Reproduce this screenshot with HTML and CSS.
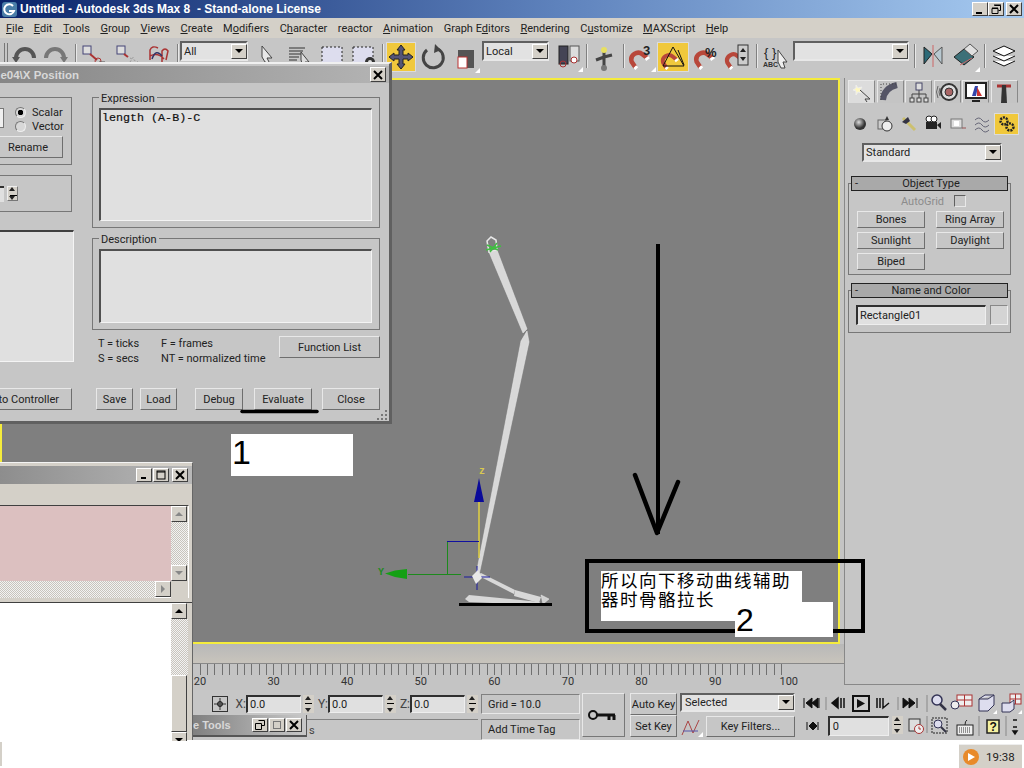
FILE: index.html
```html
<!DOCTYPE html>
<html lang="en">
<head>
<meta charset="utf-8">
<title>Untitled - Autodesk 3ds Max 8 - Stand-alone License</title>
<link rel="stylesheet" href="styles.css">
</head>
<body>
<svg class="defs" width="0" height="0">
  <symbol id="magnet" viewBox="0 0 24 24">
    <path d="M8 21 L4 15 A7.500 7.500 0 0 1 16 7 L21 11" fill="none" stroke="#b8473a" stroke-width="5"/>
    <path d="M7 23 L10 20 M19 13 L23 10" stroke="#fff" stroke-width="3"/>
  </symbol>
  <symbol id="mini" viewBox="0 0 6 6"><path d="M0 6H6V0Z" fill="#fff"/></symbol>
</svg>

<div class="app">
  <div class="titlebar">
    <svg class="app-icon" width="17" height="17"><rect x="1" y="1" width="15" height="15" rx="3" fill="#4a7ea8"/><path d="M12 5 A5 5 0 1 0 13 10 H8" fill="none" stroke="#fff" stroke-width="2"/></svg>
    <span class="title-text">Untitled - Autodesk 3ds Max 8&nbsp; - Stand-alone License</span>
    <div class="win-btns">
      <span class="wbtn"><svg width="14" height="12"><path d="M3 10H9" stroke="#000" stroke-width="2"/></svg></span>
      <span class="wbtn"><svg width="14" height="12"><path d="M5.500 2.500H11.500V7.500H9.500M3 5.500H9V10.500H3Z" fill="none" stroke="#000"/><path d="M5 2H12M3 5H9" stroke="#000" stroke-width="1"/></svg></span>
      <span class="wbtn wbtn-close"><svg width="14" height="12"><path d="M3 2L11 10M11 2L3 10" stroke="#000" stroke-width="2"/></svg></span>
    </div>
  </div>

  <nav class="menubar">
    <span><u>F</u>ile</span><span><u>E</u>dit</span><span><u>T</u>ools</span><span><u>G</u>roup</span><span><u>V</u>iews</span><span><u>C</u>reate</span><span>M<u>o</u>difiers</span><span>C<u>h</u>aracter</span><span>reactor</span><span><u>A</u>nimation</span><span>Graph E<u>d</u>itors</span><span><u>R</u>endering</span><span>C<u>u</u>stomize</span><span><u>M</u>AXScript</span><span><u>H</u>elp</span>
  </nav>

  <div class="toolbar">
    <span class="grip"></span>
    <svg class="cell c30"><path d="M6 16A9 9 0 0 1 24 16" fill="none" stroke="#555" stroke-width="4"/><path d="M2 15L10 15L6 21Z" fill="#555"/></svg>
    <svg class="cell c30"><path d="M6 16A9 9 0 0 1 24 16" fill="none" stroke="#777" stroke-width="4"/><path d="M20 15L28 15L24 21Z" fill="#777"/></svg>
    <span class="sep ml5"></span>
    <svg class="cell c33"><rect x="6" y="4" width="8" height="8" fill="#ddd" stroke="#447"/><path d="M13 12L20 18" stroke="#a33" stroke-width="2"/><circle cx="21" cy="19" r="3" fill="none" stroke="#a33"/><path d="M22 20H28" stroke="#555"/></svg>
    <svg class="cell c34"><rect x="7" y="4" width="8" height="8" fill="#ddd" stroke="#447"/><path d="M14 12L18 15" stroke="#a33" stroke-width="2"/><path d="M20 16L28 20M20 20L24 14" stroke="#999" stroke-dasharray="2 2"/></svg>
    <svg class="cell c28"><path d="M6 18V8Q8 3 14 6M18 20V9Q21 5 24 9L22 18M6 14Q14 10 20 17" fill="none" stroke="#a33" stroke-width="1.500"/><path d="M8 17Q12 6 18 14" fill="none" stroke="#336" stroke-width="1.500"/></svg>
    <span class="sep ml5"></span>
    <div class="combo combo-all ml1"><span class="combo-val">All</span><span class="combo-arrow"></span></div>
    <svg class="cell c32 ml3"><path d="M11 4L21 16L16 16L19 22L14 20L11 15Z" fill="#e8e8e8" stroke="#444"/></svg>
    <svg class="cell c32"><path d="M6 6H22M6 9H20M6 12H18M6 15H16M6 18H14M6 21H14" stroke="#333"/><path d="M18 10L26 20H22L24 25H20L18 18Z" fill="#ddd" stroke="#444"/></svg>
    <svg class="cell c32"><rect x="7" y="5" width="20" height="17" fill="#dde" stroke="#222" stroke-dasharray="2 2"/></svg>
    <svg class="cell c32"><rect x="6" y="5" width="20" height="17" fill="#dde" stroke="#222" stroke-dasharray="2 2"/><circle cx="23" cy="20" r="5" fill="#333"/><circle cx="23" cy="20" r="2" fill="#ddd"/></svg>
    <span class="sep ml3"></span>
    <svg class="cell c30 active ml2"><path d="M15 3L19 8H17V13H22V11L27 15L22 19V17H17V22H19L15 27L11 22H13V17H8V19L3 15L8 11V13H13V8H11Z" fill="#557" stroke="#222"/></svg>
    <svg class="cell c32 ml1"><path d="M10 8A10 10 0 1 0 21 7" fill="none" stroke="#444" stroke-width="3"/><path d="M18 2L24 8L17 11Z" fill="#444"/></svg>
    <svg class="cell c32"><rect x="9" y="8" width="16" height="18" fill="#555"/><rect x="9" y="15" width="9" height="11" fill="#fff" stroke="#b33"/><use href="#mini" x="26" y="26" width="5" height="5"/></svg>
    <div class="combo combo-local ml1"><span class="combo-val">Local</span><span class="combo-arrow"></span></div>
    <svg class="cell c32 ml3"><rect x="7" y="4" width="9" height="18" fill="#445" stroke="#222"/><rect x="18" y="4" width="9" height="15" fill="#ddd" stroke="#555"/><circle cx="11" cy="22" r="3" fill="none" stroke="#a33"/><circle cx="22" cy="18" r="3" fill="#fff" stroke="#a33"/><use href="#mini" x="26" y="25" width="5" height="5"/></svg>
    <span class="sep ml2"></span>
    <svg class="cell c32"><path d="M16 10V26M8 18L16 15L24 13" stroke="#444" stroke-width="3"/><circle cx="16" cy="8" r="3" fill="#e8e060"/><circle cx="16" cy="26" r="3" fill="#777"/></svg>
    <span class="sep ml3"></span>
    <svg class="cell c32"><use href="#magnet" x="3" y="6" width="22" height="22"/><text x="18" y="13" class="svg-bold">3</text><use href="#mini" x="26" y="25" width="5" height="5"/></svg>
    <svg class="cell c32 active"><use href="#magnet" x="3" y="9" width="19" height="19"/><path d="M6 24H27L16 5Z" fill="none" stroke="#111"/><path d="M21 8L27 23" stroke="#111"/></svg>
    <svg class="cell c32 ml1"><use href="#magnet" x="3" y="6" width="22" height="22"/><text x="15" y="15" class="svg-bold">%</text></svg>
    <svg class="cell c30"><use href="#magnet" x="2" y="8" width="20" height="20"/><rect x="16" y="3" width="10" height="20" fill="#ccc" stroke="#333"/><path d="M18 10L21 6L24 10ZM18 15L24 15L21 19Z" fill="#222"/></svg>
    <span class="sep ml4"></span>
    <svg class="cell c34"><text x="6" y="15" class="svg-brace">{ }</text><text x="5" y="25" class="svg-abc">ABC</text><path d="M20 8L29 20H25L27 26H23L20 20Z" fill="#eee" stroke="#444"/></svg>
    <div class="combo combo-named ml1"><span class="combo-val"></span><span class="combo-arrow"></span></div>
    <span class="sep ml5"></span>
    <svg class="cell c34"><path d="M8 5L16 12L8 22Z" fill="#2c6a78" stroke="#222"/><path d="M26 5L18 12L26 22Z" fill="#b8c8d0" stroke="#555"/><path d="M17 3V25" stroke="#c66"/></svg>
    <svg class="cell c32"><path d="M4 15L14 7L24 15L14 23Z" fill="#3c7078" stroke="#222"/><path d="M14 7L20 2L28 9L22 14Z" fill="#e0e0e0" stroke="#555"/><path d="M10 23L22 16" stroke="#c66"/><use href="#mini" x="25" y="25" width="5" height="5"/></svg>
    <span class="sep ml2"></span>
    <svg class="cell c36"><path d="M7 9L18 4L29 9L18 14Z M7 14L18 19L29 14M7 19L18 24L29 19" fill="#fff" stroke="#111"/></svg>
  </div>

  <div class="work">
    <div class="stage">
      <div class="viewport"></div>
      <div class="slider-track"></div>
      <div class="ruler">
        <div class="ticks"></div>
        <div class="nums"><span>0</span><span>10</span><span>20</span><span>30</span><span>40</span><span>50</span><span>60</span><span>70</span><span>80</span><span>90</span><span>100</span></div>
      </div>
    </div>

    <aside class="panel">
      <div class="tabs">
        <span class="tab tab-on"><svg width="24" height="22"><path d="M6 4L8 7L12 6L10 9L12 12L8 11L6 14L6 10L3 9L6 7Z" fill="#fff8c0" stroke="#eee"/><path d="M10 9L20 18L15 18L17 21" fill="#ddd" stroke="#444"/></svg></span>
        <span class="tab"><svg width="24" height="22"><path d="M5 19Q6 7 19 4" fill="none" stroke="#556" stroke-width="6"/><path d="M3 19V3H19" fill="none" stroke="#444" stroke-dasharray="1 2"/></svg></span>
        <span class="tab"><svg width="24" height="22"><path d="M12 9V13M5 18V13H19V18M12 13V18" fill="none" stroke="#444"/><rect x="9" y="2" width="6" height="7" fill="#ddd" stroke="#446"/><rect x="3" y="17" width="4" height="4" fill="#ddd" stroke="#444"/><rect x="10" y="17" width="4" height="4" fill="#ddd" stroke="#444"/><rect x="17" y="17" width="4" height="4" fill="#ddd" stroke="#444"/></svg></span>
        <span class="tab"><svg width="24" height="22"><circle cx="14" cy="11" r="8" fill="#ddd" stroke="#333" stroke-width="2"/><circle cx="14" cy="11" r="4" fill="#a66" stroke="#333"/><path d="M3 5Q0 11 3 17M5 7Q3 11 5 15" fill="none" stroke="#666"/></svg></span>
        <span class="tab"><svg width="24" height="22"><rect x="2" y="2" width="20" height="15" fill="#fff" stroke="#222" stroke-width="2"/><path d="M8 15L11 5H14L12 15Z" fill="#34a"/><path d="M13 6L18 15H13Z" fill="#c33"/><path d="M8 20H16" stroke="#222" stroke-width="2"/></svg></span>
        <span class="tab"><svg width="24" height="22"><path d="M5 5H19" stroke="#a33" stroke-width="3"/><path d="M10 4H14L15 22H9Z" fill="#333"/></svg></span>
      </div>
      <div class="subtabs">
        <span class="sub"><svg width="18" height="18"><defs><radialGradient id="sph" cx="40%" cy="35%"><stop offset="0" stop-color="#ddd"/><stop offset="1" stop-color="#333"/></radialGradient></defs><circle cx="9" cy="9" r="6" fill="url(#sph)"/></svg></span>
        <span class="sub"><svg width="18" height="18"><rect x="2" y="5" width="8" height="9" fill="#ccc" stroke="#666"/><circle cx="11" cy="11" r="5" fill="#eee" stroke="#333"/><path d="M11 1L13 5H9Z" fill="#333"/></svg></span>
        <span class="sub"><svg width="18" height="18"><path d="M3 3L15 15" stroke="#ccc070" stroke-width="3"/><path d="M2 7L8 2L10 6L6 9Z" fill="#334"/></svg></span>
        <span class="sub"><svg width="18" height="18"><rect x="2" y="7" width="11" height="7" fill="#222"/><circle cx="5" cy="4" r="3" fill="#fff" stroke="#222"/><circle cx="10" cy="4" r="3" fill="#fff" stroke="#222"/><path d="M13 10L17 7V14Z" fill="#222"/></svg></span>
        <span class="sub"><svg width="18" height="18"><rect x="2" y="4" width="11" height="9" fill="#ddd" stroke="#777"/><rect x="5" y="6" width="5" height="5" fill="#fff"/><path d="M13 13H17" stroke="#955"/></svg></span>
        <span class="sub"><svg width="18" height="18"><path d="M2 5Q6 1 9 5T16 5M2 10Q6 6 9 10T16 10M2 15Q6 11 9 15T16 15" fill="none" stroke="#667"/></svg></span>
        <span class="sub sub-on"><svg width="18" height="18"><circle cx="6" cy="6" r="3.500" fill="none" stroke="#222" stroke-width="2.500" stroke-dasharray="2 1"/><circle cx="12" cy="12" r="3.500" fill="none" stroke="#222" stroke-width="2.500" stroke-dasharray="2 1"/></svg></span>
      </div>
      <div class="combo combo-std"><span class="combo-val">Standard</span><span class="combo-arrow"></span></div>

      <section class="rollout">
        <div class="roll-head"><span>-</span><span class="roll-name">Object Type</span></div>
        <div class="autogrid"><span>AutoGrid</span><span class="check"></span></div>
        <div class="roll-btns">
          <span class="btn">Bones</span><span class="btn">Ring Array</span>
          <span class="btn">Sunlight</span><span class="btn">Daylight</span>
          <span class="btn">Biped</span>
        </div>
      </section>

      <section class="rollout rollout-name">
        <div class="roll-head"><span>-</span><span class="roll-name">Name and Color</span></div>
        <div class="name-row"><span class="field name-field">Rectangle01</span><span class="swatch"></span></div>
      </section>
    </aside>
  </div>

  <div class="controls">
    <div class="coords">
      <div class="coord-row">
        <span class="lockbox"><svg width="14" height="14"><path d="M7 1V13M1 7H13" stroke="#333"/><circle cx="7" cy="7" r="2.500" fill="#555" stroke="#222"/></svg></span>
        <span class="axis axis-x">X:</span><span class="field coord">0.0</span><span class="spin"></span>
        <span class="axis">Y:</span><span class="field coord">0.0</span><span class="spin"></span>
        <span class="axis">Z:</span><span class="field coord">0.0</span><span class="spin"></span>
      </div>
      <div class="status-row"><span class="status-field">s</span></div>
    </div>
    <div class="gridcol"><span class="info">Grid = 10.0</span><span class="info info-tag">Add Time Tag</span></div>
    <div class="keybox"><svg width="34" height="14"><circle cx="6" cy="7" r="4" fill="none" stroke="#111" stroke-width="2"/><path d="M10 7H28M22 7V12M27 7V12" stroke="#111" stroke-width="3"/></svg></div>
    <div class="keycol"><span class="btn keybtn">Auto Key</span><span class="btn keybtn">Set Key</span></div>
    <div class="selcol">
      <div class="combo combo-sel"><span class="combo-val">Selected</span><span class="combo-arrow"></span></div>
      <div class="filter-row">
        <svg width="24" height="20"><path d="M2 18L8 4L13 16L19 3" fill="none" stroke="#a44"/><path d="M3 14H18" stroke="#55a"/><use href="#mini" x="18" y="15" width="5" height="5"/></svg>
        <span class="btn filterbtn">Key Filters...</span>
      </div>
    </div>
    <div class="playcol">
      <svg class="playsvg" width="119" height="20">
        <path d="M-1 4V14M1 9L7 4V14ZM7 9L13 4V14ZM14 4V14" stroke="#111" fill="#111"/>
        <path d="M21 3V16" stroke="#888"/>
        <path d="M27 9L33 4V14ZM36 4V14M39 4V14" stroke="#111" fill="#111" stroke-width="1.500"/>
        <rect x="48" y="2" width="16" height="15" fill="#ccc" stroke="#111" stroke-width="2"/>
        <path d="M52 5L60 9.500L52 14Z" fill="#111"/>
        <path d="M72 4V14M75 4V14M78 4V14L84 9L78 14Z" stroke="#111" fill="#111" stroke-width="1.500"/>
        <path d="M93 3V16" stroke="#888"/>
        <path d="M98 4V14L104 9ZM104 4V14L110 9ZM112 4V14" stroke="#111" fill="#111"/>
      </svg>
      <div class="frame-row">
        <svg width="16" height="20"><path d="M2 6V14M4 10L8 6V14ZM13 6V14M12 10L8 6V14Z" stroke="#111" fill="#111"/></svg>
        <span class="field frame-field">0</span><span class="spin"></span>
        <svg class="timecfg" width="20" height="20"><rect x="3" y="3" width="11" height="12" fill="#ddd" stroke="#333"/><circle cx="13" cy="13" r="4.500" fill="#eee" stroke="#a33"/><path d="M13 10.500V13H15" stroke="#a33" fill="none"/></svg>
      </div>
    </div>
    <div class="navcol">
      <svg width="98" height="24" class="nav-top">
        <path d="M1 3V20" stroke="#888"/>
        <circle cx="11" cy="8" r="5" fill="#dde" stroke="#335" stroke-width="1.500"/><path d="M14 12L20 18" stroke="#334" stroke-width="2.500"/>
        <rect x="31" y="3" width="15" height="11" fill="#eee" stroke="#a33"/><path d="M38.500 3V14M31 8H46" stroke="#a33"/><circle cx="29" cy="13" r="4" fill="#eee" stroke="#335"/>
        <path d="M53 7H62L68 3V13L62 19H53Z M53 7L59 3H68" fill="#dde" stroke="#335"/><use href="#mini" x="67" y="18" width="4" height="4"/>
        <rect x="84" y="2" width="11" height="10" fill="#eee" stroke="#a33"/><path d="M89.500 2V12M84 7H95" stroke="#a33"/><path d="M76 11H84L88 8V17L84 20H76Z" fill="#dde" stroke="#335"/><use href="#mini" x="92" y="18" width="4" height="4"/>
      </svg>
      <svg width="98" height="22" class="nav-bot">
        <path d="M1 0V17M53 0V20M80 0V20" stroke="#888"/>
        <rect x="6" y="2" width="15" height="15" fill="#c8c8c8" stroke="#222" stroke-dasharray="2 1"/>
        <circle cx="12" cy="8" r="4" fill="#dde" stroke="#335"/><path d="M15 11L20 16" stroke="#334" stroke-width="2"/>
        <rect x="31" y="9" width="16" height="10" fill="#eee" stroke="#222"/><path d="M33 12H45M33 14H45M33 16H45" stroke="#333" stroke-dasharray="1 1"/><path d="M39 9Q39 5 41 4" fill="none" stroke="#222"/>
        <rect x="61" y="4" width="12" height="13" fill="#f4f0a0" stroke="#222" stroke-width="1.500"/><text x="63.500" y="15" class="svg-q">?</text>
        <path d="M87 4H91M87 11H91M87 15L91 15L89 18Z" stroke="#111" fill="#111" stroke-width="1.500"/>
      </svg>
    </div>
  </div>

  <div class="statusbar">
    <span class="stub"></span>
    <div class="tray">
      <svg width="18" height="18"><circle cx="9" cy="9" r="8" fill="#e88a2a"/><path d="M6 5L13 9L6 13Z" fill="#fff"/></svg>
      <span class="clock">19:38</span>
    </div>
  </div>
</div>

<svg class="scene" width="1024" height="768">
  <g class="bones">
    <path d="M487 241L491 237L496 240L497 250L489 252Z" fill="#7f7f7f" stroke="#e8e8e8" stroke-width="1.500"/>
    <path d="M489 252L497 250L527 329L523 333Z" fill="#d8d8d8" stroke="#eee" stroke-width=".5"/>
    <path d="M527 331L529 342L479 575L476 575L521 341Z" fill="#d8d8d8" stroke="#eee" stroke-width=".5"/>
    <path d="M477 575L481 573L515 590L514 594Z" fill="#d8d8d8"/>
    <path d="M515 590L541 597L539 603L514 596Z" fill="#d8d8d8"/>
    <path d="M541 595L549 599L543 604Z" fill="#d0d0d0" stroke="#eee" stroke-width=".5"/>
    <path d="M465 599L469 595L540 602L538 605L469 602Z" fill="#d8d8d8"/>
  </g>
  <path d="M459 604.500H552" stroke="#000" stroke-width="3"/>
  <path d="M487 245L498 250M490 252L497 243M486 250L501 246" stroke="#3fc040" stroke-width="1.500"/>
  <path d="M479 502V558" stroke="#e0d040" stroke-width="1.500"/>
  <path d="M479 478L481 488L484 502H474L477 488Z" fill="#0a0a9a"/>
  <text x="479" y="474" class="axis-z">z</text>
  <path d="M447 574.500H461M408 574.500H447" stroke="#1c8a1c" stroke-width="1"/>
  <path d="M447.500 574V541.500" stroke="#1c8a1c"/>
  <path d="M447 541.500H479" stroke="#1010a0"/>
  <path d="M385 573.500L395 570.500L407 569V579L395 577Z" fill="#14a014"/>
  <text x="378" y="575" class="axis-y">Y</text>
  <path d="M464 577H490M477 566V590" stroke="#1a1aa0"/>
  <path d="M472 576L478 570L482 578L476 584Z" fill="#e8e8e8"/>
</svg>

<section class="window dialog">
  <header class="win-title dlg-title"><span class="win-caption">Expression Controller: Bone04\X Position</span><span class="wbtn dlg-close"><svg width="14" height="12"><path d="M3 2L11 10M11 2L3 10" stroke="#000" stroke-width="2"/></svg></span></header>
  <div class="dlg-body">
    <div class="dlg-cols">
      <div class="dlg-left">
        <div class="group g-vars">
          <span class="radio-row"><span class="radio radio-on"></span>Scalar</span>
          <span class="radio-row"><span class="radio"></span>Vector</span>
          <span class="btn dbtn rename">Rename</span>
          <span class="name-stub"></span>
        </div>
        <div class="group g-spin"><span class="spin-stub"></span><span class="spin"></span></div>
        <div class="varlist"></div>
      </div>
      <div class="dlg-right">
        <div class="group g-expr"><span class="group-label">Expression</span><div class="well expr">length (A-B)-C</div></div>
        <div class="group g-desc"><span class="group-label">Description</span><div class="well desc"></div></div>
        <div class="legend-row">
          <dl class="legend"><dt>T = ticks</dt><dd>F = frames</dd><dt>S = secs</dt><dd>NT = normalized time</dd></dl>
          <span class="btn dbtn fnlist">Function List</span>
        </div>
      </div>
    </div>
    <div class="dlg-actions">
      <span class="btn dbtn a-ctrl">Load to Controller</span>
      <span class="btn dbtn a-save">Save</span>
      <span class="btn dbtn a-load">Load</span>
      <span class="btn dbtn a-debug">Debug</span>
      <span class="btn dbtn a-eval">Evaluate</span>
      <span class="btn dbtn a-close">Close</span>
    </div>
  </div>
  <svg class="grip-corner" width="11" height="11"><path d="M8 1h2v2H8zM4 5h2v2H4zM8 5h2v2H8zM0 9h2v2H0zM4 9h2v2H4zM8 9h2v2H8z" fill="#777"/></svg>
</section>

<section class="window curve-win">
  <header class="win-title cw-title">
    <span class="wbtn cw-btn"><svg width="12" height="12"><path d="M3 9H8" stroke="#000" stroke-width="2"/></svg></span>
    <span class="wbtn cw-btn"><svg width="12" height="12"><rect x="2" y="2" width="8" height="8" fill="none" stroke="#000"/><path d="M2 3H10" stroke="#000"/></svg></span>
    <span class="wbtn cw-btn cw-x"><svg width="12" height="12"><path d="M2 2L10 10M10 2L2 10" stroke="#000" stroke-width="2"/></svg></span>
  </header>
  <div class="cw-menu"></div>
  <div class="cw-pane-top">
    <div class="pink"></div>
    <div class="vscroll">
      <span class="sbtn sbtn-dim"><i class="tri-up"></i></span><span class="dither"></span><span class="sbtn sbtn-dim"><i class="tri-down"></i></span>
    </div>
    <div class="hscroll"><span class="dither"></span><span class="sbtn sbtn-dim"><i class="tri-right"></i></span></div>
    <div class="corner"></div>
  </div>
  <div class="cw-pane-bot">
    <div class="whitepane"></div>
    <div class="vscroll vscroll-bot">
      <span class="sbtn"><i class="tri-up tri-dark"></i></span><span class="dither dither-short"></span><span class="thumb"></span><span class="sbtn"><i class="tri-down tri-dark"></i></span>
    </div>
  </div>
</section>

<section class="window mini-tools">
  <span class="mini-cap">e Tools</span>
  <span class="wbtn mini-btn"><svg width="12" height="12"><path d="M4.500 1.500H10.500V6.500H8M1.500 4.500H7.500V10.500H1.500Z" fill="none" stroke="#000"/></svg></span>
  <span class="wbtn mini-btn"><svg width="12" height="12"><rect x="2.500" y="2.500" width="7" height="7" fill="none" stroke="#777"/></svg></span>
  <span class="wbtn mini-btn"><svg width="12" height="12"><path d="M2 2L10 10M10 2L2 10" stroke="#000" stroke-width="2"/></svg></span>
</section>

<div class="note note-1">1</div>
<div class="note note-2a">所以向下移动曲线辅助<br>器时骨骼拉长</div>
<div class="note note-2b">2</div>
<svg class="marks" width="1024" height="768">
  <path d="M658 244V534" stroke="#000" stroke-width="4"/>
  <path d="M635 475L657 533L678 482" fill="none" stroke="#000" stroke-width="4.500" stroke-linecap="round" stroke-linejoin="round"/>
  <path d="M242 411.500H317" stroke="#000" stroke-width="3.500" stroke-linecap="round"/>
  <path d="M735 631H587V561H863V631H833" fill="none" stroke="#000" stroke-width="4"/>
</svg>
</body>
</html>
```
FILE: styles.css
```css
* { box-sizing: border-box; }
html, body { margin: 0; padding: 0; }
body {
  width: 1024px; height: 768px; overflow: hidden; position: relative;
  background: #fff; color: #1c1c1c;
  font: 11px Roboto, "Liberation Sans", Arial, sans-serif;
}
.defs { position: absolute; }
.app { width: 1024px; height: 768px; display: flex; flex-direction: column; }

/* title and menu */
.titlebar {
  height: 18px; display: flex; align-items: center; padding-left: 1px;
  background: linear-gradient(90deg, #0a246a, #5f83bd 55%, #a6caf0);
  color: #fff; flex: none;
}
.title-text { font: bold 12px "Liberation Sans", Arial, sans-serif; margin-left: 2px; }
.win-btns { margin-left: auto; display: flex; margin-right: 2px; }
.wbtn {
  width: 16px; height: 14px; display: flex; align-items: center; justify-content: center;
  background: #d4d0c8; border: 1px solid; border-color: #fff #404040 #404040 #fff;
}
.wbtn-close { margin-left: 2px; }
.menubar {
  height: 20px; flex: none; background: #d4d0c8; display: flex; gap: 10.500px;
  align-items: center; padding-left: 6px; color: #222;
}

/* toolbar */
.toolbar { height: 40px; flex: none; background: #c6c6c6; display: flex; align-items: flex-start; padding-top: 4px; }
.grip { width: 4px; height: 26px; margin: 1px 2px 0 4px; border-left: 1px solid #777; border-right: 1px solid #777; }
.cell { height: 30px; flex: none; display: block; overflow: visible; }
.c28 { width: 28px; } .c30 { width: 30px; } .c32 { width: 32px; } .c33 { width: 33px; } .c34 { width: 34px; } .c36 { width: 36px; }
.ml1 { margin-left: 1px; } .ml2 { margin-left: 2px; } .ml3 { margin-left: 3px; } .ml4 { margin-left: 4px; } .ml5 { margin-left: 5px; }
.sep { width: 2px; height: 24px; margin-top: 2px; border-left: 1px solid #808080; border-right: 1px solid #e8e8e8; flex: none; }
.active { background: #f0c83c; outline: 1px solid #dcdcdc; outline-offset: -1px; }
.svg-bold { font: bold 13px "Liberation Sans", sans-serif; fill: #222; }
.svg-brace { font: 13px "Liberation Sans", sans-serif; fill: #222; }
.svg-abc { font: bold 7px "Liberation Sans", sans-serif; fill: #333; }
.svg-q { font: bold 12px "Liberation Sans", sans-serif; fill: #111; }

.combo {
  display: flex; align-items: center; flex: none; height: 20px; background: #e2e2e2;
  border: 2px solid; border-color: #606060 #e8e8e8 #e8e8e8 #606060; padding-left: 2px;
}
.toolbar .combo { margin-top: -1px; }
.combo-val { flex: 1; color: #222; }
.combo-arrow {
  width: 16px; height: 15px; margin-right: -1px; flex: none; position: relative;
  background: #d4d0c8; border: 1px solid; border-color: #fff #404040 #404040 #fff;
}
.combo-arrow::after {
  content: ""; position: absolute; left: 3px; top: 4px; border: 4px solid transparent; border-top: 4px solid #000; border-bottom: 0;
}
.combo-all { width: 68px; }
.combo-local { width: 67px; }
.combo-named { width: 116px; }

/* stage */
.work { flex: none; height: 612px; display: flex; background: #c6c6c6; }
.stage { width: 844px; flex: none; background: #c4c4c4; display: flex; flex-direction: column; }
.viewport { height: 566px; flex: none; width: 840px; background: #7f7f7f; border: 2px solid #f5ec3c; }
.slider-track { height: 20px; flex: none; background: linear-gradient(#b8b8b8, #c8c4bc); border-bottom: 1px solid #888; }
.ruler { flex: 1; position: relative; }
.ticks {
  height: 11px; width: 787px; margin-left: 1.280px;
  background: repeating-linear-gradient(90deg, #707070 0 1px, transparent 1px 7.360px);
}
.nums { display: flex; margin-left: 16px; margin-top: 1px; line-height: 12px; color: #333; }
.nums span { width: 73.600px; flex: none; text-align: center; }

/* command panel */
.panel {
  width: 176px; flex: none; background: #c6c6c6; padding: 2px 0 0 3px;
  border-left: 1px solid #888; border-bottom: 1px solid #888; height: 607px;
}
.tabs { display: flex; gap: 1.600px; height: 23px; }
.tab {
  width: 27px; display: flex; align-items: center; justify-content: center;
  background: #c4c4c4; border: 1px solid; border-color: #e8e8e8 #888 transparent #e8e8e8;
}
.tab-on { background: #dcdcdc; }
.subtabs { display: flex; margin-top: 10px; height: 22px; }
.sub { width: 24.400px; flex: none; display: flex; align-items: center; justify-content: center; }
.sub-on { background: #f0c83c; outline: 1px solid #dcdcdc; outline-offset: -1px; }
.combo-std { width: 140px; margin: 8px 0 0 14px; height: 19px; }
.rollout { position: relative; width: 163px; height: 92px; margin-top: 21px; border: 1px solid #777; }
.rollout-name { height: 43px; margin-top: 15px; }
.roll-head {
  display: grid; grid-template-columns: 14px 1fr 14px; height: 15px; margin: -8px 2px 0; line-height: 13px;
  background: #a9a9a9; border: 1px solid #222; color: #222; padding-left: 3px;
}
.roll-name { text-align: center; }
.autogrid { display: flex; align-items: center; height: 14px; margin: 3px 0 3px 52px; color: #8c8c8c; gap: 10px; }
.check { width: 12px; height: 12px; border: 1px solid; border-color: #606060 #e8e8e8 #e8e8e8 #606060; }
.roll-btns { display: grid; grid-template-columns: 68px 68px; column-gap: 11px; row-gap: 4px; margin-left: 8px; }
.btn {
  display: flex; align-items: center; justify-content: center; height: 17px; color: #222;
  background: #c6c6c6; border: 1px solid; border-color: #e8e8e8 #6e6e6e #6e6e6e #e8e8e8; white-space: nowrap;
}
.name-row { display: flex; gap: 4px; margin: 7px 0 0 7px; }
.field {
  display: flex; align-items: center; padding-left: 2px; background: #e0e0e0; color: #222;
  border: 1px solid; border-color: #303030 #eee #eee #303030; border-width: 2px 1px 1px 2px;
}
.name-field { width: 130px; height: 20px; }
.swatch { width: 18px; height: 20px; background: #d4d4d4; border: 1px solid; border-color: #888 #eee #eee #888; }

/* bottom controls */
.controls { flex: none; height: 50px; background: #c6c6c6; display: flex; }
.coords { width: 481px; flex: none; }
.coord-row { display: flex; align-items: flex-start; padding: 5px 0 0 212px; height: 29px; }
.lockbox { width: 16px; height: 16px; margin-top: 1px; flex: none; border: 1px solid #333; display: flex; align-items: center; justify-content: center; }
.axis { width: 14px; flex: none; text-align: right; line-height: 18px; color: #444; font-size: 12px; }
.axis-x { width: 18px; }
.coord { width: 55px; height: 18px; flex: none; }
.spin {
  width: 11px; height: 18px; margin: 0 0 0 2px; flex: none; position: relative;
  background: #d4d0c8 linear-gradient(#000, #000) 2px 8px / 7px 1px no-repeat;
}
.spin::before, .spin::after {
  content: ""; position: absolute; left: 2px; border: 3.500px solid transparent; 
}
.spin::before { top: 1px; border-top: 0; border-bottom: 4px solid #222; }
.spin::after { bottom: 1px; border-bottom: 0; border-top: 4px solid #222; }
.status-row { height: 21px; padding-left: 192px; }
.status-field {
  display: flex; align-items: center; justify-content: flex-start; padding-left: 116px; height: 21px; width: 286px;
  border-top: 1px solid #808080; border-left: 1px solid #808080; color: #444;
}
.gridcol { width: 99px; flex: none; display: flex; flex-direction: column; padding-top: 4px; gap: 5px; }
.info { height: 20px; display: flex; align-items: center; padding-left: 6px; border: 1px solid; border-color: #808080 #e8e8e8 #e8e8e8 #808080; color: #222; }
.info-tag { height: 21px; }
.keybox { width: 43px; height: 44px; flex: none; margin: 3px 0 0 2px; display: flex; align-items: center; justify-content: center; border: 1px solid; border-color: #e8e8e8 #777 #777 #e8e8e8; }
.keycol { width: 47px; margin: 3px 0 0 5px; flex: none; display: flex; flex-direction: column; }
.keybtn { height: 22px; }
.selcol { width: 115px; margin: 3px 0 0 3px; flex: none; }
.combo-sel { height: 19px; }
.combo-sel .combo-val { padding-left: 1px; }
.filter-row { display: flex; align-items: center; margin-top: 4px; gap: 2px; }
.filterbtn { width: 89px; height: 21px; }
.playcol { width: 121px; margin-left: 10px; flex: none; padding-top: 4px; }
.playsvg { display: block; overflow: visible; }
.frame-row { display: flex; align-items: flex-start; margin-top: 2px; }
.frame-field { width: 62px; height: 20px; margin-left: 7px; padding-left: 3px; }
.frame-row .spin { margin-left: 3px; }
.timecfg { margin-left: 3px; flex: none; }
.navcol { flex: none; padding-top: 2px; }
.nav-top, .nav-bot { display: block; }

/* status */
.statusbar { flex: 1; background: #fff; display: flex; justify-content: space-between; align-items: flex-end; }
.stub { width: 2px; height: 24px; margin-bottom: 2px; background: #d4d0c8; }
.tray { width: 63px; height: 24px; margin-right: 2px; background: #d4d0c8; display: flex; align-items: center; padding-left: 3px; gap: 6px; border-top: 1px solid #eee; }
.clock { color: #222; font-size: 11.500px; }

/* scene overlay */
.scene, .marks { position: absolute; left: 0; top: 0; pointer-events: none; }
.scene { z-index: 1; }
.marks { z-index: 6; }
.axis-z { font: bold 10px "Liberation Mono", monospace; fill: #d8c850; }
.axis-y { font: bold 10px "Liberation Mono", monospace; fill: #1c8a1c; }

/* floating windows */
.window { position: absolute; z-index: 3; background: #c6c6c6; }
.dialog {
  left: -60px; top: 62px; width: 452px; height: 362px;
  border: 1px solid; border-color: #f0f0f0 #606060 #606060 #f0f0f0;
  border-width: 2px 3px 3px 0; 
}
.win-title { display: flex; align-items: center; }
.dlg-title {
  height: 17px; margin-top: 2px; padding: 0 3px 0 0; justify-content: space-between;
  background: linear-gradient(90deg, #7f7f7f, #b4b4b4);
  color: #d8d8d8; font: bold 11.500px "Liberation Sans", Arial, sans-serif; white-space: nowrap;
}
.win-caption { width: 300px; margin-left: -161px; text-align: right; flex: none; }
.dlg-close { width: 16px; height: 15px; }
.dlg-body { position: relative; }
.dlg-cols { display: flex; height: 305px; }
.dlg-left { width: 134px; flex: none; margin-right: 18px; padding-top: 14px; }
.dlg-right { width: 288px; flex: none; padding-top: 14px; }
.group { position: relative; border: 1px solid #777; }
.group-label { position: absolute; left: 6px; top: -6px; padding: 0 2px 0 2px; line-height: 13px; background: #c6c6c6; color: #222; }
.g-vars { height: 68px; width: 132px; display: flex; flex-direction: column; align-items: flex-end; padding: 7px 8px 0 0; color: #222; }
.radio-row { display: flex; align-items: center; gap: 6px; height: 14px; width: 53px; margin-right: -5px; }
.radio { width: 11px; height: 11px; border-radius: 50%; background: #d8d8d8; border: 1px solid; border-color: #777 #eee #eee #777; flex: none; }
.radio-on { background: radial-gradient(#000 0 2.500px, #d8d8d8 3px); }
.rename { width: 70px; height: 22px; margin-top: 3px; }
.name-stub { position: absolute; left: 52px; top: 10px; width: 11px; height: 20px; background: #f0f0f0; border: 1px solid #777; border-left: 0; }
.g-spin { height: 37px; width: 132px; margin-top: 10px; display: flex; justify-content: flex-end; align-items: center; padding: 0 53px 0 0; }
.spin-stub { width: 6px; height: 16px; background: #e0e0e0; border-top: 2px solid #303030; }
.g-spin .spin { height: 15px; margin-left: 3px; border: 1px solid; border-color: #eee #777 #777 #eee; }
.g-spin .spin::before { top: 0; left: 1px; }
.g-spin .spin::after { bottom: 0; left: 1px; }
.varlist { width: 134px; height: 132px; margin-top: 18px; background: #e0e0e0; border-top: 2px solid #404040; border-right: 1px solid #f4f4f4; border-bottom: 1px solid #f4f4f4; }
.g-expr { height: 131px; padding: 10px 7px 0 6px; }
.g-desc { height: 92px; margin-top: 10px; padding: 10px 7px 0 6px; }
.well { background: #e0e0e0; border: 1px solid; border-width: 2px 1px 1px 2px; border-color: #505050 #f4f4f4 #f4f4f4 #505050; }
.expr { height: 113px; padding: 2px 0 0 1px; font: 11.700px "Liberation Mono", monospace; color: #111; -webkit-text-stroke: .2px #111; line-height: 13px; }
.desc { height: 74px; }
.legend-row { display: flex; margin-top: 6px; justify-content: space-between; padding-left: 6px; }
.legend { display: grid; grid-template-columns: 63px auto; margin: 0; line-height: 15px; color: #222; height: 30px; }
.legend dt, .legend dd { margin: 0; white-space: nowrap; }
.fnlist { width: 101px; height: 22px; }
.dlg-actions { display: flex; height: 22px; }
.dlg-actions .btn { height: 22px; flex: none; }
.a-ctrl { width: 132px; justify-content: flex-end !important; padding-right: 12px; }
.a-save { width: 37px; margin-left: 24px; }
.a-load { width: 37px; margin-left: 7px; }
.a-debug { width: 48px; margin-left: 18px; }
.a-eval { width: 58px; margin-left: 11px; }
.a-close { width: 58px; margin-left: 10px; }
.grip-corner { position: absolute; right: 1px; bottom: 1px; }

.curve-win {
  left: -60px; top: 462px; width: 253px; height: 278px; background: #d4d0c8;
  border-top: 1px solid #f4f4f4; border-right: 1px solid #666; padding-top: 3px;
}
.cw-title {
  height: 18px; justify-content: flex-end; gap: 1px; padding-right: 4px;
  background: linear-gradient(90deg, #808080, #b8b8b8);
}
.cw-btn { width: 16px; height: 14px; margin-left: 0; }
.cw-x { margin-left: 2px; }
.cw-menu { height: 21px; }
.cw-pane-top {
  display: grid; grid-template-columns: 231px 17px; grid-template-rows: 75px 17px; height: 93px;
  border-top: 1px solid #404040; border-bottom: 1px solid #fff; border-right: 1px solid #fff;
  width: 249px;
}
.pink { background: #dcc0c0; }
.vscroll { display: flex; flex-direction: column; }
.hscroll { display: flex; }
.corner { background: #d4d0c8; }
.sbtn {
  width: 16px; height: 16px; flex: none; display: flex; align-items: center; justify-content: center;
  background: #d4d0c8; border: 1px solid; border-color: #fff #404040 #404040 #fff;
}
.dither { flex: 1; background: conic-gradient(#c8c4bc 25%, #f2f2f2 0 50%, #c8c4bc 0 75%, #f2f2f2 0) 0 0 / 2px 2px; }
.tri-up, .tri-down, .tri-right { display: block; width: 0; height: 0; border: 4px solid transparent; }
.tri-up { border-top: 0; border-bottom: 4px solid #888; }
.tri-down { border-bottom: 0; border-top: 4px solid #888; }
.tri-right { border-right: 0; border-left: 4px solid #888; }
.tri-dark.tri-up { border-bottom-color: #000; }
.tri-dark.tri-down { border-top-color: #000; }
.cw-pane-bot { display: grid; grid-template-columns: 231px 17px; height: 139px; margin-top: 4px; border-top: 1px solid #404040; }
.whitepane { background: #fff; }
.vscroll-bot { height: 138px; overflow: hidden; }
.dither-short { flex: 0 0 56px; }
.thumb { height: 57px; flex: none; width: 16px; background: #d4d0c8; border: 1px solid; border-color: #fff #404040 #404040 #fff; }

.mini-tools {
  z-index: 4; left: 193px; top: 715px; width: 114px; height: 22px; display: flex; align-items: center;
  background: linear-gradient(90deg, #808080, #c8c8c8); padding-right: 4px; border-bottom: 2px solid #555; border-right: 1px solid #555;
}
.mini-cap { font: bold 11px "Liberation Sans", Arial, sans-serif; color: #d8d8d8; flex: 1; white-space: nowrap; }
.mini-btn { margin-left: 1px; }

/* annotations */
.note { position: absolute; z-index: 5; background: #fff; color: #000; font-family: "Liberation Sans", Arial, sans-serif; }
.note-1 { left: 231px; top: 434px; width: 122px; height: 42px; font-size: 34px; line-height: 36px; padding-left: 1px; }
.note-2a {
  left: 601px; top: 571px; width: 201px; height: 50px; font: 17.500px/18.500px "Noto Sans CJK SC", sans-serif; letter-spacing: 1.500px;
  white-space: nowrap;
}
.note-2b { left: 735px; top: 602px; width: 98px; height: 35px; font-size: 32px; line-height: 36px; padding-left: 1px; }
```
